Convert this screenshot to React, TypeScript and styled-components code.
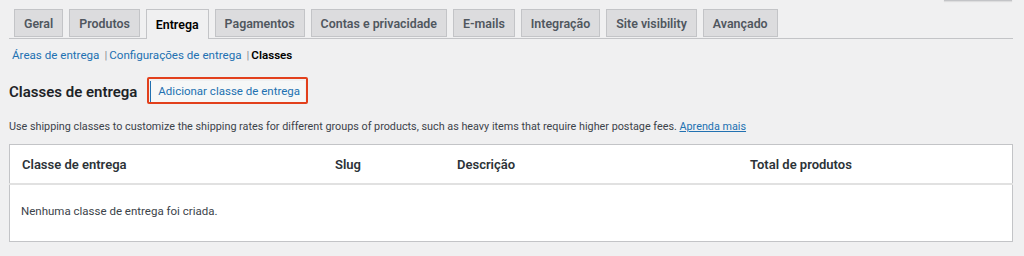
import React from "react";
import styled, { createGlobalStyle } from "styled-components";

const GlobalStyle = createGlobalStyle`
  html, body {
    margin: 0;
    padding: 0;
    background: #f0f0f1;
  }
  body {
    font-family: Roboto, "Noto Sans", sans-serif;
    color: #1d2327;
  }
`;

const Page = styled.div`
  position: relative;
  padding: 9px 11px 0 9px;
  height: 256px;
  box-sizing: border-box;
`;

const ScreenOptions = styled.div`
  position: absolute;
  top: -6px;
  right: 12px;
  width: 66px;
  height: 6px;
  border: 1px solid #c3c4c7;
  border-top: none;
  background: #f0f0f1;
  box-shadow: 0 1px 1px rgba(0, 0, 0, 0.08);
`;

const TabBar = styled.nav`
  display: flex;
  gap: 6px;
  padding-left: 5px;
  border-bottom: 1px solid #c3c4c7;
  height: 29px;
`;

const Tab = styled.a<{ $active?: boolean }>`
  display: flex;
  align-items: center;
  padding: 0 9px;
  height: ${(p) => (p.$active ? "30px" : "28px")};
  border: 1px solid #c3c4c7;
  border-bottom: ${(p) => (p.$active ? "none" : "1px solid #c3c4c7")};
  background: ${(p) => (p.$active ? "#f0f0f1" : "#dcdcde")};
  color: ${(p) => (p.$active ? "#000" : "#50575e")};
  font-size: 12.4px;
  font-weight: 600;
  box-sizing: border-box;
  cursor: pointer;
`;

const SubNav = styled.ul`
  display: flex;
  align-items: center;
  list-style: none;
  margin: 0;
  padding: 8px 0 0 3px;
  font-size: 11.6px;
  line-height: 17px;
  color: #646970;
`;

const SubItem = styled.li<{ $current?: boolean }>`
  color: ${(p) => (p.$current ? "#000" : "#2271b1")};
  font-weight: ${(p) => (p.$current ? 600 : 400)};
`;

const Sep = styled.span`
  color: #8c8f94;
  margin: 0 2px 0 5px;
`;

const TitleRow = styled.div`
  display: flex;
  align-items: center;
  gap: 10px;
  margin-top: 12px;
  height: 28px;
`;

const Title = styled.h2`
  margin: 0;
  font-size: 15px;
  font-weight: 600;
  color: #1d2327;
  padding-top: 4px;
`;

const Highlight = styled.div`
  border: 2px solid #e2401c;
  border-radius: 2px;
  padding: 1px 1px 0 1px;
`;

const AddButton = styled.button`
  font-family: inherit;
  font-size: 11.5px;
  color: #2271b1;
  background: #f6f7f7;
  border: none;
  border-left: 1px solid #2271b1;
  padding: 3px 5px 3px 7px;
  line-height: 15px;
  cursor: pointer;
`;

const Description = styled.p`
  margin: 16px 0 0 0;
  font-size: 10.8px;
  line-height: 14px;
  color: #3c434a;
`;

const LearnMore = styled.a`
  color: #2271b1;
  text-decoration: underline;
`;

const Table = styled.table`
  width: 100%;
  margin-top: 10px;
  table-layout: fixed;
  border-collapse: collapse;
  background: #fff;
  border: 1px solid #c3c4c7;
`;

const HeadCell = styled.th<{ $w?: string }>`
  text-align: left;
  font-size: 13px;
  font-weight: 600;
  color: #2c3338;
  height: 38px;
  padding: 0 0 0 12px;
  width: ${(p) => p.$w ?? "auto"};
  border-bottom: 2px solid #e1e1e1;
`;

const EmptyCell = styled.td`
  height: 52px;
  padding: 0 0 4px 11px;
  font-size: 11.5px;
  color: #3c434a;
`;

const subLinks = ["Áreas de entrega", "Configurações de entrega"];

const tabs = [
  "Geral",
  "Produtos",
  "Entrega",
  "Pagamentos",
  "Contas e privacidade",
  "E-mails",
  "Integração",
  "Site visibility",
  "Avançado",
];

export default function App() {
  return (
    <>
      <GlobalStyle />
      <Page>
        <ScreenOptions />
        <TabBar>
          {tabs.map((t) => (
            <Tab key={t} $active={t === "Entrega"}>
              {t}
            </Tab>
          ))}
        </TabBar>
        <SubNav>
          {subLinks.map((l) => (
            <React.Fragment key={l}>
              <SubItem>{l}</SubItem>
              <Sep>|</Sep>
            </React.Fragment>
          ))}
          <SubItem $current>Classes</SubItem>
        </SubNav>
        <TitleRow>
          <Title>Classes de entrega</Title>
          <Highlight>
            <AddButton>Adicionar classe de entrega</AddButton>
          </Highlight>
        </TitleRow>
        <Description>
          Use shipping classes to customize the shipping rates for different
          groups of products, such as heavy items that require higher postage
          fees. <LearnMore>Aprenda mais</LearnMore>
        </Description>
        <Table>
          <thead>
            <tr>
              <HeadCell $w="301px">Classe de entrega</HeadCell>
              <HeadCell $w="110px">Slug</HeadCell>
              <HeadCell $w="281px">Descrição</HeadCell>
              <HeadCell>Total de produtos</HeadCell>
            </tr>
          </thead>
          <tbody>
            <tr>
              <EmptyCell colSpan={4}>
                Nenhuma classe de entrega foi criada.
              </EmptyCell>
            </tr>
          </tbody>
        </Table>
      </Page>
    </>
  );
}
